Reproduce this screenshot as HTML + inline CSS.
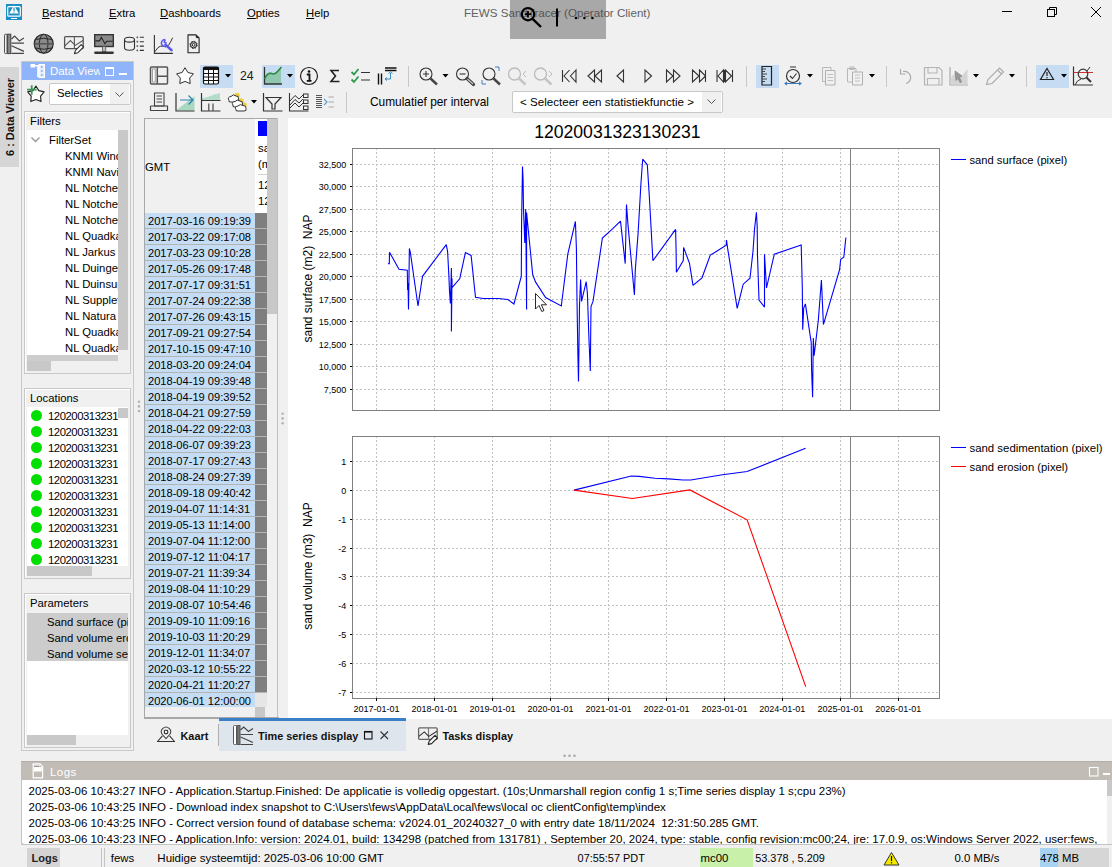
<!DOCTYPE html>
<html><head><meta charset="utf-8">
<style>
html,body{margin:0;padding:0}
body{width:1112px;height:867px;overflow:hidden;position:relative;background:#f0f0f0;font-family:"Liberation Sans",sans-serif;font-size:11.3px;color:#000}
.a{position:absolute}
.t{position:absolute;white-space:nowrap;line-height:16px;font-size:11.3px}
.u{text-decoration:underline;text-underline-offset:1px}
svg{position:absolute;overflow:visible}
</style></head><body>

<!-- ===== title bar ===== -->
<svg class="a" style="left:0;top:0" width="1112" height="60" viewBox="0 0 1112 60">
  <!-- app icon -->
  <rect x="6" y="4" width="16" height="16" fill="#1a8fc4"/>
  <rect x="7.7" y="6.7" width="12.6" height="9.5" rx="1" fill="none" stroke="#fff" stroke-width="1.2"/>
  <path d="M14 5.2 L18.8 13.6 L9.2 13.6 Z" fill="#fff"/>
  <rect x="13.4" y="7.6" width="1.2" height="3.4" fill="#1a8fc4"/>
  <rect x="13.4" y="11.6" width="1.2" height="1" fill="#1a8fc4"/>
  <rect x="11" y="18" width="6" height="1" fill="#fff"/>
  <!-- window controls -->
  <rect x="1002" y="11" width="10" height="1" fill="#000" shape-rendering="crispEdges"/>
  <rect x="1047.5" y="9.5" width="7" height="7" fill="none" stroke="#000" stroke-width="1"/>
  <path d="M1049.5 9.5 V7.5 H1056.5 V14.5 H1054.5" fill="none" stroke="#000" stroke-width="1"/>
  <path d="M1091 7 L1101 17 M1101 7 L1091 17" stroke="#000" stroke-width="1"/>
</svg>
<div class="t" style="left:42px;top:5px"><span class="u">B</span>estand</div>
<div class="t" style="left:109px;top:5px"><span class="u">E</span>xtra</div>
<div class="t" style="left:160px;top:5px"><span class="u">D</span>ashboards</div>
<div class="t" style="left:247px;top:5px"><span class="u">O</span>pties</div>
<div class="t" style="left:306px;top:5px"><span class="u">H</span>elp</div>
<div class="t" style="left:464px;top:5px;color:#606060;font-size:11.6px">FEWS SandTracer (Operator Client)</div>
<!-- gray overlay -->
<div class="a" style="left:510px;top:0;width:96px;height:39px;background:rgba(70,70,70,0.42)"></div>
<svg class="a" style="left:0;top:0" width="1112" height="60" viewBox="0 0 1112 60">
  <circle cx="528" cy="14.2" r="6.2" fill="none" stroke="#000" stroke-width="2.2"/>
  <path d="M524.8 14.2 H531.2 M528 11 V17.4" stroke="#000" stroke-width="1.8"/>
  <path d="M532.6 18.8 L541 27" stroke="#000" stroke-width="2.4"/>
  <rect x="556" y="8.5" width="2" height="18" fill="#000"/>
  <circle cx="576" cy="18" r="1.3" fill="#000"/><circle cx="584.4" cy="18" r="1.3" fill="#000"/><circle cx="592.4" cy="18" r="1.3" fill="#000"/>
</svg>

<!-- ===== main toolbar ===== -->
<svg class="a" style="left:0;top:0" width="220" height="60" viewBox="0 0 220 60" fill="none" stroke="#3a3a3a" stroke-width="1.2">
  <!-- ts display -->
  <rect x="4.6" y="34.2" width="2.4" height="19.4" rx="1" fill="#fff" stroke="#444" stroke-width="1"/>
  <rect x="7.6" y="34.2" width="3.2" height="19.4" fill="#888" stroke="#444" stroke-width="1"/>
  <path d="M11.5 39 L14.6 36 L19.4 40.9 L23.9 38.1 M11.5 43.2 H23.9 M11.5 45.8 L23.9 51.4 M11.5 53.4 H23.9" stroke="#444" stroke-width="1.2"/>
  <!-- globe -->
  <circle cx="43.7" cy="43.75" r="9.5" fill="#8a8a8a" stroke="#2a2a2a" stroke-width="1.2"/>
  <ellipse cx="43.7" cy="43.75" rx="4.3" ry="9.5" stroke="#2a2a2a" stroke-width="1"/>
  <path d="M35.5 39.5 Q43.7 37 51.9 39.5 M35.5 48 Q43.7 50.5 51.9 48" stroke="#2a2a2a" stroke-width="1"/>
  <path d="M34.5 43.75 H52.9" stroke="#555" stroke-width="1.6"/>
  <!-- picture+pencil -->
  <rect x="64.6" y="36.6" width="18.6" height="12" rx="1" stroke="#555" stroke-width="1.3"/>
  <path d="M74.4 36.6 V48.6 M64.8 45.8 L70.4 40.5 L75.2 45.4 L82.9 40.5" stroke="#555" stroke-width="1.1"/>
  <path d="M74.4 53.6 L75.5 50.3 L81.2 44.6 L83.6 47 L77.9 52.7 Z" fill="#fff" stroke="#333" stroke-width="1.1" stroke-linejoin="round"/>
  <!-- monitor -->
  <rect x="94.7" y="34.7" width="18.6" height="11.8" fill="#8a8a8a" stroke="#333" stroke-width="1.4"/>
  <path d="M95.5 40.9 H99.5 L101.3 37.3 L105 43.75 L106.6 41.3 H112.6" stroke="#222" stroke-width="1.1"/>
  <rect x="102.5" y="46.6" width="3.3" height="5" fill="#bbb" stroke="#555" stroke-width="0.8"/>
  <rect x="94.2" y="51.4" width="19.6" height="2.6" rx="1.2" fill="#333" stroke="none"/>
  <!-- db list -->
  <ellipse cx="129.5" cy="39.7" rx="5" ry="2.4" stroke="#333" stroke-width="1.1"/>
  <path d="M124.5 39.7 V47.8 A5 2.4 0 0 0 134.5 47.8 V39.7" stroke="#333" stroke-width="1.1"/>
  <path d="M139.8 37.3 H143.9 M139.8 41.7 H143.9 M139.8 46.1 H143.9 M139.8 50.4 H143.9" stroke="#333" stroke-width="1.1"/>
  <g fill="#555" stroke="none"><path d="M137.3 36.2 L138.4 37.3 L137.3 38.4 L136.2 37.3Z M137.3 40.6 L138.4 41.7 L137.3 42.8 L136.2 41.7Z M137.3 45 L138.4 46.1 L137.3 47.2 L136.2 46.1Z M137.3 49.3 L138.4 50.4 L137.3 51.5 L136.2 50.4Z"/></g>
  <!-- chart wrench -->
  <path d="M154.4 34.9 V53.4 H172.9" stroke="#333" stroke-width="1.1"/>
  <path d="M154.8 51.8 Q158 46.5 160.4 46.2 Q163.5 45.8 166 47 Q169 46 170.9 41.3 L172.6 37.7" stroke="#333" stroke-width="1"/>
  <path d="M165.5 44.6 L171.5 50.2" stroke="#5a5af0" stroke-width="2.6" stroke-linecap="round"/>
  <path d="M165.2 39.6 A3.4 3.4 0 1 0 167.3 45.3 M165.2 39.6 L164.3 42.2 L166.6 43.3" stroke="#5a5af0" stroke-width="1.6"/>
  <!-- doc gear -->
  <path d="M188 34.9 H196 L199.1 38 V52.7 H188 Z" stroke="#222" stroke-width="1.1" stroke-linejoin="round"/>
  <path d="M196.3 35.2 V37.7 H198.8" fill="#222" stroke="#222" stroke-width="0.8"/>
  <circle cx="193.6" cy="44.9" r="3.6" stroke="#222" stroke-width="1" stroke-dasharray="1.6 1.2"/>
  <circle cx="193.6" cy="44.9" r="3" stroke="#222" stroke-width="1"/>
  <circle cx="193.6" cy="44.9" r="1.4" stroke="#222" stroke-width="1"/>
</svg>

<!-- ===== left vertical tab ===== -->
<div class="a" style="left:0;top:67px;width:19px;height:100px;background:#d6d6d6"></div>
<div class="a" style="left:0;top:167px;width:19px;height:0"></div>
<div class="t" style="left:-30.5px;top:109px;width:80px;height:16px;transform:rotate(-90deg);font-weight:bold;font-size:11px;text-align:center;color:#111">6 : Data Viewer</div>

<!-- ===== data view panel ===== -->
<div class="a" style="left:21px;top:61px;width:111px;height:688px;border:1px solid #c8c8c8;background:#f0f0f0"></div>
<div class="a" style="left:22px;top:62px;width:111px;height:18px;background:#8fb4fa"></div>
<div class="a" style="left:50px;top:62px;width:50px;height:18px;overflow:hidden"><div class="t" style="left:0;top:1px;color:#fff;font-size:11.4px">Data View</div></div>
<svg class="a" style="left:0;top:0" width="140" height="120" viewBox="0 0 140 120">
  <!-- tree icon -->
  <rect x="30.5" y="64" width="4.5" height="3.5" fill="#fff"/>
  <path d="M35 65.8 H38 V77" stroke="#fff" stroke-width="1.6" fill="none"/>
  <rect x="39" y="64.5" width="5.5" height="13" fill="#e8eefa" stroke="#fff" stroke-width="1"/>
  <circle cx="41.8" cy="67" r="1.1" fill="#8fb4fa"/><circle cx="41.8" cy="71" r="1.1" fill="#8fb4fa"/><circle cx="41.8" cy="75" r="1.1" fill="#8fb4fa"/>
  <rect x="105.5" y="67.5" width="8" height="8" fill="none" stroke="#fff" stroke-width="1"/><rect x="105" y="67" width="9" height="2" fill="#fff"/>
  <rect x="119" y="73" width="8" height="2" fill="#fff"/>
  <!-- star with plus -->
  <path d="M35.9 86.0 L38.8 90.6 L44.1 91.9 L40.6 96.1 L41.0 101.6 L35.9 99.5 L30.8 101.6 L31.2 96.1 L27.7 91.9 L33.0 90.6 Z" fill="#fff" stroke="#222" stroke-width="1.1" stroke-linejoin="round"/>
  <path d="M31.7 85.2 V94.8 M27.1 89.7 H36.7" stroke="#3a9a55" stroke-width="1.8"/>
</svg>
<!-- combo selecties -->
<div class="a" style="left:49px;top:83px;width:80px;height:20px;border:1px solid #c8c8c8;border-radius:2px;background:#fff"></div>
<div class="a" style="left:110px;top:84px;width:19px;height:20px;background:#f0f0f0"></div>
<svg class="a" style="left:0;top:0" width="140" height="120" viewBox="0 0 140 120"><path d="M115.5 92.5 L119.5 96.5 L123.5 92.5" fill="none" stroke="#555" stroke-width="1"/></svg>
<div class="t" style="left:57px;top:85px">Selecties</div>

<!-- filters group -->
<div class="a" style="left:24px;top:111px;width:105px;height:261px;border:1px solid #c8c8c8;box-shadow:inset 1px 1px 0 #fff"></div>
<div class="t" style="left:30px;top:113px">Filters</div>
<div class="a" style="left:27px;top:130px;width:91px;height:231px;background:#fff;overflow:hidden">
  <div class="t" style="left:22px;top:2px">FilterSet</div>
  <div class="t" style="left:38px;top:18px">KNMI Wind</div>
  <div class="t" style="left:38px;top:34px">KNMI Navigator</div>
  <div class="t" style="left:38px;top:50px">NL Notchedd</div>
  <div class="t" style="left:38px;top:66px">NL Notchedd</div>
  <div class="t" style="left:38px;top:82px">NL Notchedd</div>
  <div class="t" style="left:38px;top:98px">NL Quadkaart</div>
  <div class="t" style="left:38px;top:114px">NL Jarkus</div>
  <div class="t" style="left:38px;top:130px">NL Duingebied</div>
  <div class="t" style="left:38px;top:146px">NL Duinsuppletie</div>
  <div class="t" style="left:38px;top:162px">NL Suppleties</div>
  <div class="t" style="left:38px;top:178px">NL Natura</div>
  <div class="t" style="left:38px;top:194px">NL Quadkaart</div>
  <div class="t" style="left:38px;top:210px">NL Quadkaart</div>
  <div class="t" style="left:38px;top:226px">NL Sand S</div>
  <div class="a" style="left:0;top:225px;width:91px;height:6px;background:#cdcdcd"></div>
</div>
<svg class="a" style="left:0;top:0" width="140" height="160" viewBox="0 0 140 160"><path d="M31.5 137.5 L35.5 141.5 L39.5 137.5" fill="none" stroke="#999" stroke-width="1.4"/></svg>
<div class="a" style="left:118px;top:130px;width:10px;height:231px;background:#f0f0f0"></div>
<div class="a" style="left:118px;top:130px;width:10px;height:220px;background:#c8c8c8"></div>
<div class="a" style="left:27px;top:361px;width:101px;height:10px;background:#f0f0f0"></div>
<div class="a" style="left:27px;top:361px;width:24px;height:10px;background:#c8c8c8"></div>

<!-- locations group -->
<div class="a" style="left:24px;top:388px;width:105px;height:189px;border:1px solid #c8c8c8;box-shadow:inset 1px 1px 0 #fff"></div>
<div class="t" style="left:30px;top:390px">Locations</div>
<div class="a" style="left:27px;top:407px;width:91px;height:159px;background:#fff;overflow:hidden">
  <div class="a" style="left:0;top:0;width:91px"><div class="a" style="left:4px;top:3px;width:11px;height:11px;border-radius:50%;background:#00e000"></div><div class="t" style="left:21px;top:1px;letter-spacing:-0.45px">120200313231</div><div class="a" style="left:4px;top:19px;width:11px;height:11px;border-radius:50%;background:#00e000"></div><div class="t" style="left:21px;top:17px;letter-spacing:-0.45px">120200313231</div><div class="a" style="left:4px;top:35px;width:11px;height:11px;border-radius:50%;background:#00e000"></div><div class="t" style="left:21px;top:33px;letter-spacing:-0.45px">120200313231</div><div class="a" style="left:4px;top:51px;width:11px;height:11px;border-radius:50%;background:#00e000"></div><div class="t" style="left:21px;top:49px;letter-spacing:-0.45px">120200313231</div><div class="a" style="left:4px;top:67px;width:11px;height:11px;border-radius:50%;background:#00e000"></div><div class="t" style="left:21px;top:65px;letter-spacing:-0.45px">120200313231</div><div class="a" style="left:4px;top:83px;width:11px;height:11px;border-radius:50%;background:#00e000"></div><div class="t" style="left:21px;top:81px;letter-spacing:-0.45px">120200313231</div><div class="a" style="left:4px;top:99px;width:11px;height:11px;border-radius:50%;background:#00e000"></div><div class="t" style="left:21px;top:97px;letter-spacing:-0.45px">120200313231</div><div class="a" style="left:4px;top:115px;width:11px;height:11px;border-radius:50%;background:#00e000"></div><div class="t" style="left:21px;top:113px;letter-spacing:-0.45px">120200313231</div><div class="a" style="left:4px;top:131px;width:11px;height:11px;border-radius:50%;background:#00e000"></div><div class="t" style="left:21px;top:129px;letter-spacing:-0.45px">120200313231</div><div class="a" style="left:4px;top:147px;width:11px;height:11px;border-radius:50%;background:#00e000"></div><div class="t" style="left:21px;top:145px;letter-spacing:-0.45px">120200313231</div></div>
</div>
<div class="a" style="left:118px;top:407px;width:10px;height:159px;background:#fff"></div>
<div class="a" style="left:118px;top:408px;width:10px;height:10px;background:#c8c8c8"></div>
<div class="a" style="left:27px;top:566px;width:101px;height:10px;background:#f0f0f0"></div>
<div class="a" style="left:27px;top:566px;width:65px;height:10px;background:#c8c8c8"></div>

<!-- parameters group -->
<div class="a" style="left:24px;top:593px;width:105px;height:153px;border:1px solid #c8c8c8;box-shadow:inset 1px 1px 0 #fff"></div>
<div class="t" style="left:30px;top:595px">Parameters</div>
<div class="a" style="left:27px;top:613px;width:101px;height:122px;background:#fff;overflow:hidden">
  <div class="a" style="left:0;top:0;width:101px;height:48px;background:#cccccc"></div>
  <div class="t" style="left:20px;top:1px">Sand surface (pixel)</div>
  <div class="t" style="left:20px;top:17px">Sand volume erosion</div>
  <div class="t" style="left:20px;top:33px">Sand volume sedimentation</div>
</div>
<div class="a" style="left:27px;top:735px;width:101px;height:10px;background:#f0f0f0"></div>
<div class="a" style="left:27px;top:735px;width:49px;height:10px;background:#c8c8c8"></div>

<!-- ===== chart toolbar ===== -->
<div class="a" style="left:200px;top:65px;width:33px;height:23px;background:#c5dcf3"></div>
<div class="a" style="left:262px;top:65px;width:33px;height:23px;background:#c5dcf3"></div>
<div class="a" style="left:756px;top:65px;width:23px;height:23px;background:#c5dcf3"></div>
<div class="a" style="left:1036px;top:65px;width:33px;height:23px;background:#c5dcf3"></div>
<div class="t" style="left:240px;top:68px;font-size:12.3px;color:#222">24</div>
<div class="t" style="left:370px;top:94px;font-size:11.9px">Cumulatief per interval</div>
<div class="a" style="left:512px;top:91px;width:209px;height:20px;border:1px solid #c8c8c8;border-radius:2px;background:#fff"></div>
<div class="a" style="left:702px;top:92px;width:19px;height:20px;background:#f0f0f0"></div>
<div class="t" style="left:520px;top:94px;font-size:11.6px">&lt; Selecteer een statistiekfunctie &gt;</div>
<svg class="a" id="tb" style="left:0;top:0" width="1112" height="120" viewBox="0 0 1112 120" fill="none" stroke="#333" stroke-width="1.2">
  <path d="M707.5 99.5 L711.5 103.5 L715.5 99.5" stroke="#555" stroke-width="1"/>
  <!-- separators -->
  <path d="M408.5 66 V87 M746.5 66 V87 M886.5 66 V87 M1026.5 66 V87 M346.5 92 V113" stroke="#c8c8c8" stroke-width="1"/>
  <!-- layout -->
  <rect x="150.5" y="67" width="17" height="17" rx="1" stroke="#555" stroke-width="1.5"/>
  <path d="M157.3 67 V84 M157.3 76.2 H167.5" stroke="#555" stroke-width="1.5"/>
  <rect x="152.6" y="69" width="2.6" height="13" fill="#fff" stroke="#888" stroke-width="0.8"/>
  <!-- star -->
  <path d="M185.0 67.7 L187.9 72.5 L193.4 73.8 L189.7 78.0 L190.2 83.6 L185.0 81.4 L179.8 83.6 L180.3 78.0 L176.6 73.8 L182.1 72.5 Z" fill="#fff" stroke="#333" stroke-width="1" stroke-linejoin="round"/>
  <!-- table -->
  <rect x="203.5" y="67" width="15" height="17" rx="1.5" fill="#fff" stroke="#111" stroke-width="1.2"/>
  <rect x="203.5" y="67" width="15" height="3" fill="#111" stroke="none"/>
  <path d="M203.5 73.5 H218.5 M203.5 77 H218.5 M203.5 80.5 H218.5 M208.5 70 V84 M213.5 70 V84" stroke="#111" stroke-width="1"/>
  <!-- chart -->
  <path d="M264.5 76 Q268 71 271 72.5 Q275 74 278 71 L281 67.5 V84 H264.5 Z" fill="#8fc7b0" stroke="none"/>
  <path d="M264.5 67 V84 H282" stroke="#333" stroke-width="1.3"/>
  <path d="M264.5 79 Q268 72 271.5 73.5 Q275 75 278 71 L281.5 67" stroke="#2a8a3a" stroke-width="1.5"/>
  <!-- info -->
  <circle cx="309" cy="76" r="8.5" stroke="#222" stroke-width="1.2"/>
  <circle cx="309" cy="71.5" r="1.3" fill="#111" stroke="none"/>
  <path d="M306.8 74.5 H309.5 V80.5 M306.8 80.8 H311.5" stroke="#111" stroke-width="1.8"/>
  <!-- sigma -->
  <path d="M339 70.5 H331 L335.5 76 L331 81.5 H339.5" stroke="#222" stroke-width="1.6"/>
  <!-- checklist -->
  <path d="M351.5 72 L354 74.5 L358.5 69 M351.5 79.5 L354 82 L358.5 76.5" stroke="#2a9a4a" stroke-width="1.8"/>
  <path d="M361 72.5 H370 M361 80 H370" stroke="#333" stroke-width="1.2"/>
  <!-- sort icon -->
  <path d="M378.5 73.5 V84.5 M381.5 73.5 V84.5" stroke="#111" stroke-width="1.4"/>
  <path d="M385 68 H396.5 M385 70.5 H396.5" stroke="#111" stroke-width="1.4"/>
  <path d="M390.5 73 V79 H385 M388.5 73.5 L390.5 72 L392.5 73.5 M387 77.5 L385 79 L387 80.5" stroke="#3a8ac4" stroke-width="1"/>
  <!-- zoom in -->
  <circle cx="426" cy="74" r="6" stroke="#333" stroke-width="1.1"/>
  <path d="M423 74 H429 M426 71 V77" stroke="#333" stroke-width="1.1"/>
  <path d="M430.5 78.5 L437 84.5" stroke="#444" stroke-width="2.4"/>
  <!-- zoom out -->
  <circle cx="462.5" cy="74" r="6" stroke="#333" stroke-width="1.1"/>
  <path d="M459.5 74 H465.5" stroke="#333" stroke-width="1.1"/>
  <path d="M467 78.5 L473.5 84.5" stroke="#444" stroke-width="3.2" stroke-linecap="round"/><path d="M467.8 79.3 L472.7 83.7" stroke="#d8d8d8" stroke-width="1.1" stroke-linecap="round"/>
  <!-- zoom fit -->
  <circle cx="489" cy="74" r="6" stroke="#333" stroke-width="1.1"/>
  <path d="M493.5 78.5 L500 84.5" stroke="#444" stroke-width="2.4"/>
  <path d="M482 80 V84 H486 M495 67 H499 V71" stroke="#3a7fc0" stroke-width="1"/>
  <!-- zoom prev/next gray -->
  <circle cx="514.5" cy="74" r="6" stroke="#bbb" stroke-width="1.3"/>
  <path d="M519 78.5 L525.5 84.5" stroke="#c4c4c4" stroke-width="2.4"/>
  <path d="M526 71 L523 74 L526 77" stroke="#bbb" stroke-width="1"/>
  <circle cx="540.5" cy="74" r="6" stroke="#bbb" stroke-width="1.3"/>
  <path d="M545 78.5 L551.5 84.5" stroke="#c4c4c4" stroke-width="2.4"/>
  <path d="M549 71 L552 74 L549 77" stroke="#bbb" stroke-width="1"/>
  <!-- nav -->
  <g stroke="#333" stroke-width="1.1">
  <path d="M562.5 70 V82 M569.5 70 L564 76 L569.5 82 M576 70 L570.5 76 L576 82 Z"/>
  <path d="M588 76 L594.5 70 V82 Z M595 76 L601.5 70 V82 Z"/>
  <path d="M617 76 L623.5 70 V82 Z"/>
  <path d="M651.5 76 L645 70 V82 Z"/>
  <path d="M666.5 70 L673 76 L666.5 82 Z M673.5 70 L680 76 L673.5 82 Z"/>
  <path d="M692.5 70 L699 76 L692.5 82 Z M699.5 70 L705.5 76 L699.5 82 Z M705.5 70 V82"/>
  <path d="M717 70 V82 M732.5 70 V82 M724.5 70 V82 M718 76 L723.5 70 V82 Z M731.5 76 L725.5 70 V82 Z"/>
  </g>
  <!-- ruler -->
  <path d="M762 66.5 H771.5 V85 H762 Z" stroke="#222" stroke-width="1.2"/>
  <path d="M762 69 H766 M762 71.5 H765 M762 74 H767 M762 76.5 H765 M762 79 H767 M762 81.5 H765" stroke="#444" stroke-width="1"/>
  <!-- stopwatch -->
  <circle cx="793" cy="76" r="6.5" stroke="#333" stroke-width="1.2"/>
  <path d="M790 67 H796 M790 76 L792.5 78.5 L796.5 73.5" stroke="#333" stroke-width="1.1"/>
  <path d="M785 83.5 H801 M787 82 L785 83.5 L787 85 M799 82 L801 83.5 L799 85" stroke="#3a7fc0" stroke-width="1.1"/>
  <!-- copy -->
  <path d="M822.5 67.5 H831 V81.5 H822.5 Z" stroke="#b8b8b8" stroke-width="1"/>
  <path d="M825.5 70.5 H835 V85 H825.5 Z" fill="#f0f0f0" stroke="#b0b0b0" stroke-width="1"/>
  <path d="M827.5 74.5 H833 M827.5 77.5 H833 M827.5 80.5 H833" stroke="#c0c0c0" stroke-width="1"/>
  <!-- paste -->
  <path d="M847.5 68.5 H856 V82 H847.5 Z" stroke="#b8b8b8" stroke-width="1"/>
  <rect x="850" y="67" width="4" height="2.5" stroke="#b8b8b8" stroke-width="1"/>
  <path d="M852.5 72 H862.5 V85 H852.5 Z" fill="#f0f0f0" stroke="#b0b0b0" stroke-width="1"/>
  <path d="M855 75 H860 M855 78 H860 M855 81 H860" stroke="#c0c0c0" stroke-width="1"/>
  <!-- undo -->
  <path d="M903 71.5 A6 6 0 1 1 906 83.5" stroke="#aaa" stroke-width="1.2"/>
  <path d="M900.5 69 V74 H905.5" stroke="#aaa" stroke-width="1.2"/>
  <!-- save -->
  <path d="M924.5 67.5 H939 L942 70.5 V85 H924.5 Z" stroke="#b4b4b4" stroke-width="1.2"/>
  <path d="M928 67.5 V73 H937 V67.5 M927.5 85 V78.5 H939 V85" stroke="#b4b4b4" stroke-width="1.1"/>
  <!-- chart cursor -->
  <path d="M950 67 V85 H968" stroke="#aaa" stroke-width="1.2"/>
  <path d="M950.5 78 L955 73 L960 78 L967.5 69 V84.5 H950.5 Z" fill="#d4d4d4" stroke="none"/>
  <path d="M955 71 L962 76 L959.5 77.5 L961.5 82 L960 82.5 L958 78.5 L956 80.5 Z" fill="#999" stroke="#888" stroke-width="0.8"/>
  <!-- pencil -->
  <path d="M986.5 84.5 L988 79.5 L999.5 68 L1003.5 72 L992 83.5 Z M997.5 70 L1001.5 74" stroke="#aaa" stroke-width="1.1"/>
  <!-- warning -->
  <path d="M1047 68.5 L1053.5 79.5 H1040.5 Z" stroke="#222" stroke-width="1.2"/>
  <path d="M1047 72 V76" stroke="#222" stroke-width="1.2"/><circle cx="1047" cy="77.8" r="0.7" fill="#222" stroke="none"/>
  <!-- chart magnifier -->
  <path d="M1073.5 66.5 V85 H1093" stroke="#333" stroke-width="1.2"/>
  <path d="M1073.5 72.5 H1093" stroke="#d03030" stroke-width="1"/>
  <circle cx="1083" cy="74" r="4.8" stroke="#333" stroke-width="1.2"/>
  <path d="M1086.5 77.5 L1091 82" stroke="#333" stroke-width="2"/>
  <path d="M1075 85 Q1077 80 1081 79 M1090 67 L1087 71" stroke="#333" stroke-width="1"/>
  <!-- row 2 -->
  <!-- print -->
  <path d="M154.5 93 H164 V106 H154.5 Z M156.5 96 H162 M156.5 99 H162 M156.5 102 H162" stroke="#444" stroke-width="1.1"/>
  <path d="M150.5 106 V110.5 H167.5 V106 H150.5" stroke="#444" stroke-width="1.2"/>
  <!-- chart arrow -->
  <path d="M176 110.5 L194.5 96 V110.5 Z" fill="#a8d8c0" stroke="none"/>
  <path d="M176 93 V111 H194.5" stroke="#333" stroke-width="1.2"/>
  <path d="M180 100 H193 M188.5 95.5 L193 100 L188.5 104.5" stroke="#2a80b0" stroke-width="1.2"/>
  <!-- bar area -->
  <path d="M201.5 98 Q206 97.5 209 96.5 Q214 94 220 93 V100 H201.5 Z" fill="#b4dcc8" stroke="none"/>
  <path d="M201.5 93 V111 H220.5 M201.5 100.5 H220.5" stroke="#333" stroke-width="1.2"/>
  <path d="M208.8 103.5 V111 M213 103.5 V111" stroke="#555" stroke-width="1.3"/>
  <!-- clouds -->
  <circle cx="237" cy="95.5" r="2.8" fill="#f0d040" stroke="none"/>
  <circle cx="241" cy="101" r="2.8" fill="#f0d040" stroke="none"/>
  <circle cx="244" cy="105" r="2.8" fill="#f0d040" stroke="none"/>
  <path d="M229 100.5 Q227 97 231 96.5 Q233 93.5 236 96 Q239 95.5 238.5 99 Q240 101.5 237 102 H231 Q228 102 229 100.5 Z" fill="#fff" stroke="#333" stroke-width="1"/>
  <path d="M233 105 Q231 102 235 101.5 Q237 99 240 101 Q243 101 242.5 104 Q244 106.5 241 107 H235 Q232 107 233 105 Z" fill="#fff" stroke="#333" stroke-width="1"/>
  <path d="M236 109.5 Q234 106.5 238 106 Q240 103.5 243 105.5 Q246.5 105.5 246 108.5 Q247 111 244 111 H238 Q235 111 236 109.5 Z" fill="#fff" stroke="#333" stroke-width="1"/>
  <!-- filter -->
  <path d="M263.5 93 V111 H282.5" stroke="#333" stroke-width="1.2"/>
  <path d="M266 97.5 H281 L275 104 V109 H272 V104 Z" stroke="#333" stroke-width="1.2"/>
  <!-- chart lines -->
  <path d="M289.5 93 V111 H308.5" stroke="#333" stroke-width="1.1"/>
  <path d="M290 101 L295 95.5 L299 99 L303 95 M290 105 L295 99.5 L299 103 L303 99 M290 108 L295 103 L299 107 L303 103" stroke="#333" stroke-width="1"/>
  <rect x="303.5" y="94" width="4.5" height="3.5" stroke="#333" stroke-width="1"/>
  <rect x="303.5" y="100" width="4.5" height="3.5" stroke="#333" stroke-width="1"/>
  <rect x="303.5" y="106" width="4.5" height="3.5" stroke="#333" stroke-width="1"/>
  <!-- indent -->
  <path d="M316 95.5 H322 M316 97.5 H322 M316 99.5 H322 M316 101.5 H322 M316 103.5 H322 M316 105.5 H322 M316 107.5 H322" stroke="#555" stroke-width="1" shape-rendering="crispEdges"/>
  <path d="M324 99 L327 102 L324 105" stroke="#5aa0d0" stroke-width="1.1"/>
  <path d="M328.5 97 H334 M328.5 102 H334 M328.5 107 H334" stroke="#aaa" stroke-width="1"/>
  <!-- dropdown arrows -->
  <g fill="#000" stroke="none">
  <path d="M225 74 H231 L228 77.5 Z"/><path d="M287 74 H293 L290 77.5 Z"/><path d="M442.5 74 H448.5 L445.5 77.5 Z"/>
  <path d="M251 100 H257 L254 103.5 Z"/><path d="M807 74 H813 L810 77.5 Z"/><path d="M869 74 H875 L872 77.5 Z"/>
  <path d="M973 74 H979 L976 77.5 Z"/><path d="M1009 74 H1015 L1012 77.5 Z"/><path d="M1061 74 H1067 L1064 77.5 Z"/>
  </g>
</svg>

<!-- ===== table ===== -->
<div class="a" style="left:144px;top:118px;width:132px;height:599px;border:1px solid #a8a8a8;border-right:1px solid #c0c0c0;background:#f0f0f0"></div>
<div class="t" style="left:145px;top:159px">GMT</div>
<div class="a" style="left:255px;top:119px;width:12px;height:94px;background:#fff;overflow:hidden">
  <div class="a" style="left:3px;top:2px;width:12px;height:15px;background:#0000ff"></div>
  <div class="t" style="left:3px;top:139px"></div>
  <div class="t" style="left:3px;top:21px">sand</div>
  <div class="t" style="left:3px;top:36.5px">(m2)</div>
  <div class="a" style="left:3px;top:55px;width:12px;height:1px;background:#d0d0d0"></div>
  <div class="t" style="left:3px;top:58px">120200</div>
  <div class="t" style="left:3px;top:74px">120200</div>
</div>
<div class="a" style="left:145px;top:213px;width:110px;height:15px;background:#c5ddf4"></div><div class="a" style="left:255px;top:213px;width:12px;height:15px;background:#7f7f7f"></div><div class="t" style="left:148px;top:213px;font-size:11.1px">2017-03-16 09:19:39</div><div class="a" style="left:145px;top:228px;width:122px;height:1px;background:#b4b4b4"></div><div class="a" style="left:145px;top:229px;width:110px;height:15px;background:#c5ddf4"></div><div class="a" style="left:255px;top:229px;width:12px;height:15px;background:#7f7f7f"></div><div class="t" style="left:148px;top:229px;font-size:11.1px">2017-03-22 09:17:08</div><div class="a" style="left:145px;top:244px;width:122px;height:1px;background:#b4b4b4"></div><div class="a" style="left:145px;top:245px;width:110px;height:15px;background:#c5ddf4"></div><div class="a" style="left:255px;top:245px;width:12px;height:15px;background:#7f7f7f"></div><div class="t" style="left:148px;top:245px;font-size:11.1px">2017-03-23 09:10:28</div><div class="a" style="left:145px;top:260px;width:122px;height:1px;background:#b4b4b4"></div><div class="a" style="left:145px;top:261px;width:110px;height:15px;background:#c5ddf4"></div><div class="a" style="left:255px;top:261px;width:12px;height:15px;background:#7f7f7f"></div><div class="t" style="left:148px;top:261px;font-size:11.1px">2017-05-26 09:17:48</div><div class="a" style="left:145px;top:276px;width:122px;height:1px;background:#b4b4b4"></div><div class="a" style="left:145px;top:277px;width:110px;height:15px;background:#c5ddf4"></div><div class="a" style="left:255px;top:277px;width:12px;height:15px;background:#7f7f7f"></div><div class="t" style="left:148px;top:277px;font-size:11.1px">2017-07-17 09:31:51</div><div class="a" style="left:145px;top:292px;width:122px;height:1px;background:#b4b4b4"></div><div class="a" style="left:145px;top:293px;width:110px;height:15px;background:#c5ddf4"></div><div class="a" style="left:255px;top:293px;width:12px;height:15px;background:#7f7f7f"></div><div class="t" style="left:148px;top:293px;font-size:11.1px">2017-07-24 09:22:38</div><div class="a" style="left:145px;top:308px;width:122px;height:1px;background:#b4b4b4"></div><div class="a" style="left:145px;top:309px;width:110px;height:15px;background:#c5ddf4"></div><div class="a" style="left:255px;top:309px;width:12px;height:15px;background:#7f7f7f"></div><div class="t" style="left:148px;top:309px;font-size:11.1px">2017-07-26 09:43:15</div><div class="a" style="left:145px;top:324px;width:122px;height:1px;background:#b4b4b4"></div><div class="a" style="left:145px;top:325px;width:110px;height:15px;background:#c5ddf4"></div><div class="a" style="left:255px;top:325px;width:12px;height:15px;background:#7f7f7f"></div><div class="t" style="left:148px;top:325px;font-size:11.1px">2017-09-21 09:27:54</div><div class="a" style="left:145px;top:340px;width:122px;height:1px;background:#b4b4b4"></div><div class="a" style="left:145px;top:341px;width:110px;height:15px;background:#c5ddf4"></div><div class="a" style="left:255px;top:341px;width:12px;height:15px;background:#7f7f7f"></div><div class="t" style="left:148px;top:341px;font-size:11.1px">2017-10-15 09:47:10</div><div class="a" style="left:145px;top:356px;width:122px;height:1px;background:#b4b4b4"></div><div class="a" style="left:145px;top:357px;width:110px;height:15px;background:#c5ddf4"></div><div class="a" style="left:255px;top:357px;width:12px;height:15px;background:#7f7f7f"></div><div class="t" style="left:148px;top:357px;font-size:11.1px">2018-03-20 09:24:04</div><div class="a" style="left:145px;top:372px;width:122px;height:1px;background:#b4b4b4"></div><div class="a" style="left:145px;top:373px;width:110px;height:15px;background:#c5ddf4"></div><div class="a" style="left:255px;top:373px;width:12px;height:15px;background:#7f7f7f"></div><div class="t" style="left:148px;top:373px;font-size:11.1px">2018-04-19 09:39:48</div><div class="a" style="left:145px;top:388px;width:122px;height:1px;background:#b4b4b4"></div><div class="a" style="left:145px;top:389px;width:110px;height:15px;background:#c5ddf4"></div><div class="a" style="left:255px;top:389px;width:12px;height:15px;background:#7f7f7f"></div><div class="t" style="left:148px;top:389px;font-size:11.1px">2018-04-19 09:39:52</div><div class="a" style="left:145px;top:404px;width:122px;height:1px;background:#b4b4b4"></div><div class="a" style="left:145px;top:405px;width:110px;height:15px;background:#c5ddf4"></div><div class="a" style="left:255px;top:405px;width:12px;height:15px;background:#7f7f7f"></div><div class="t" style="left:148px;top:405px;font-size:11.1px">2018-04-21 09:27:59</div><div class="a" style="left:145px;top:420px;width:122px;height:1px;background:#b4b4b4"></div><div class="a" style="left:145px;top:421px;width:110px;height:15px;background:#c5ddf4"></div><div class="a" style="left:255px;top:421px;width:12px;height:15px;background:#7f7f7f"></div><div class="t" style="left:148px;top:421px;font-size:11.1px">2018-04-22 09:22:03</div><div class="a" style="left:145px;top:436px;width:122px;height:1px;background:#b4b4b4"></div><div class="a" style="left:145px;top:437px;width:110px;height:15px;background:#c5ddf4"></div><div class="a" style="left:255px;top:437px;width:12px;height:15px;background:#7f7f7f"></div><div class="t" style="left:148px;top:437px;font-size:11.1px">2018-06-07 09:39:23</div><div class="a" style="left:145px;top:452px;width:122px;height:1px;background:#b4b4b4"></div><div class="a" style="left:145px;top:453px;width:110px;height:15px;background:#c5ddf4"></div><div class="a" style="left:255px;top:453px;width:12px;height:15px;background:#7f7f7f"></div><div class="t" style="left:148px;top:453px;font-size:11.1px">2018-07-17 09:27:43</div><div class="a" style="left:145px;top:468px;width:122px;height:1px;background:#b4b4b4"></div><div class="a" style="left:145px;top:469px;width:110px;height:15px;background:#c5ddf4"></div><div class="a" style="left:255px;top:469px;width:12px;height:15px;background:#7f7f7f"></div><div class="t" style="left:148px;top:469px;font-size:11.1px">2018-08-24 09:27:39</div><div class="a" style="left:145px;top:484px;width:122px;height:1px;background:#b4b4b4"></div><div class="a" style="left:145px;top:485px;width:110px;height:15px;background:#c5ddf4"></div><div class="a" style="left:255px;top:485px;width:12px;height:15px;background:#7f7f7f"></div><div class="t" style="left:148px;top:485px;font-size:11.1px">2018-09-18 09:40:42</div><div class="a" style="left:145px;top:500px;width:122px;height:1px;background:#b4b4b4"></div><div class="a" style="left:145px;top:501px;width:110px;height:15px;background:#c5ddf4"></div><div class="a" style="left:255px;top:501px;width:12px;height:15px;background:#7f7f7f"></div><div class="t" style="left:148px;top:501px;font-size:11.1px">2019-04-07 11:14:31</div><div class="a" style="left:145px;top:516px;width:122px;height:1px;background:#b4b4b4"></div><div class="a" style="left:145px;top:517px;width:110px;height:15px;background:#c5ddf4"></div><div class="a" style="left:255px;top:517px;width:12px;height:15px;background:#7f7f7f"></div><div class="t" style="left:148px;top:517px;font-size:11.1px">2019-05-13 11:14:00</div><div class="a" style="left:145px;top:532px;width:122px;height:1px;background:#b4b4b4"></div><div class="a" style="left:145px;top:533px;width:110px;height:15px;background:#c5ddf4"></div><div class="a" style="left:255px;top:533px;width:12px;height:15px;background:#7f7f7f"></div><div class="t" style="left:148px;top:533px;font-size:11.1px">2019-07-04 11:12:00</div><div class="a" style="left:145px;top:548px;width:122px;height:1px;background:#b4b4b4"></div><div class="a" style="left:145px;top:549px;width:110px;height:15px;background:#c5ddf4"></div><div class="a" style="left:255px;top:549px;width:12px;height:15px;background:#7f7f7f"></div><div class="t" style="left:148px;top:549px;font-size:11.1px">2019-07-12 11:04:17</div><div class="a" style="left:145px;top:564px;width:122px;height:1px;background:#b4b4b4"></div><div class="a" style="left:145px;top:565px;width:110px;height:15px;background:#c5ddf4"></div><div class="a" style="left:255px;top:565px;width:12px;height:15px;background:#7f7f7f"></div><div class="t" style="left:148px;top:565px;font-size:11.1px">2019-07-21 11:39:34</div><div class="a" style="left:145px;top:580px;width:122px;height:1px;background:#b4b4b4"></div><div class="a" style="left:145px;top:581px;width:110px;height:15px;background:#c5ddf4"></div><div class="a" style="left:255px;top:581px;width:12px;height:15px;background:#7f7f7f"></div><div class="t" style="left:148px;top:581px;font-size:11.1px">2019-08-04 11:10:29</div><div class="a" style="left:145px;top:596px;width:122px;height:1px;background:#b4b4b4"></div><div class="a" style="left:145px;top:597px;width:110px;height:15px;background:#c5ddf4"></div><div class="a" style="left:255px;top:597px;width:12px;height:15px;background:#7f7f7f"></div><div class="t" style="left:148px;top:597px;font-size:11.1px">2019-08-07 10:54:46</div><div class="a" style="left:145px;top:612px;width:122px;height:1px;background:#b4b4b4"></div><div class="a" style="left:145px;top:613px;width:110px;height:15px;background:#c5ddf4"></div><div class="a" style="left:255px;top:613px;width:12px;height:15px;background:#7f7f7f"></div><div class="t" style="left:148px;top:613px;font-size:11.1px">2019-09-10 11:09:16</div><div class="a" style="left:145px;top:628px;width:122px;height:1px;background:#b4b4b4"></div><div class="a" style="left:145px;top:629px;width:110px;height:15px;background:#c5ddf4"></div><div class="a" style="left:255px;top:629px;width:12px;height:15px;background:#7f7f7f"></div><div class="t" style="left:148px;top:629px;font-size:11.1px">2019-10-03 11:20:29</div><div class="a" style="left:145px;top:644px;width:122px;height:1px;background:#b4b4b4"></div><div class="a" style="left:145px;top:645px;width:110px;height:15px;background:#c5ddf4"></div><div class="a" style="left:255px;top:645px;width:12px;height:15px;background:#7f7f7f"></div><div class="t" style="left:148px;top:645px;font-size:11.1px">2019-12-01 11:34:07</div><div class="a" style="left:145px;top:660px;width:122px;height:1px;background:#b4b4b4"></div><div class="a" style="left:145px;top:661px;width:110px;height:15px;background:#c5ddf4"></div><div class="a" style="left:255px;top:661px;width:12px;height:15px;background:#7f7f7f"></div><div class="t" style="left:148px;top:661px;font-size:11.1px">2020-03-12 10:55:22</div><div class="a" style="left:145px;top:676px;width:122px;height:1px;background:#b4b4b4"></div><div class="a" style="left:145px;top:677px;width:110px;height:15px;background:#c5ddf4"></div><div class="a" style="left:255px;top:677px;width:12px;height:15px;background:#7f7f7f"></div><div class="t" style="left:148px;top:677px;font-size:11.1px">2020-04-21 11:20:27</div><div class="a" style="left:145px;top:692px;width:122px;height:1px;background:#b4b4b4"></div><div class="a" style="left:145px;top:693px;width:110px;height:14px;background:#c5ddf4"></div><div class="a" style="left:255px;top:693px;width:12px;height:14px;background:#e6e6e6"></div><div class="t" style="left:148px;top:693px;font-size:11.1px">2020-06-01 12:00:00</div>
<div class="a" style="left:267px;top:119px;width:10px;height:598px;background:#f0f0f0"></div><div class="a" style="left:277px;top:118px;width:1px;height:600px;background:#c0c0c0"></div>
<div class="a" style="left:267px;top:119px;width:10px;height:195px;background:#c8c8c8"></div>
<div class="a" style="left:255px;top:707px;width:10px;height:10px;background:#c8c8c8"></div>
<svg class="a" style="left:0;top:0" width="300" height="450" viewBox="0 0 300 450"><g fill="#b4b4b4"><circle cx="139" cy="401.8" r="1.3"/><circle cx="139" cy="406.4" r="1.3"/><circle cx="139" cy="411" r="1.3"/><circle cx="282.6" cy="413.7" r="1.3"/><circle cx="282.6" cy="418.4" r="1.3"/><circle cx="282.6" cy="423.2" r="1.3"/></g></svg>

<!-- ===== chart ===== -->
<div class="a" style="left:288px;top:118px;width:824px;height:601px;background:#fff"></div>
<svg class="a" style="left:288px;top:118px" width="824" height="601" viewBox="288 118 824 601" font-family="Liberation Sans" shape-rendering="crispEdges">
<text x="534.2" y="137.5" font-size="17.6" fill="#000" shape-rendering="auto">12020031323130231</text>
<path d="M376.5 148 V410 M434.5 148 V410 M492.5 148 V410 M550.5 148 V410 M608.5 148 V410 M666.5 148 V410 M724.5 148 V410 M782.5 148 V410 M840.5 148 V410 M898.5 148 V410 M352 389.5 H939 M352 366.5 H939 M352 344.5 H939 M352 321.5 H939 M352 299.5 H939 M352 276.5 H939 M352 254.5 H939 M352 231.5 H939 M352 209.5 H939 M352 186.5 H939 M352 164.5 H939" stroke="#c0c0c0" stroke-width="1" stroke-dasharray="2 2" fill="none"/>
<rect x="352.5" y="148.5" width="587" height="262" fill="none" stroke="#808080" stroke-width="1"/>
<path d="M350 389.5 H352 M350 366.5 H352 M350 344.5 H352 M350 321.5 H352 M350 299.5 H352 M350 276.5 H352 M350 254.5 H352 M350 231.5 H352 M350 209.5 H352 M350 186.5 H352 M350 164.5 H352" stroke="#000" stroke-width="1"/>
<rect x="850" y="149" width="1" height="261" fill="#808080"/>
<path d="M376.5 436 V698 M434.5 436 V698 M492.5 436 V698 M550.5 436 V698 M608.5 436 V698 M666.5 436 V698 M724.5 436 V698 M782.5 436 V698 M840.5 436 V698 M898.5 436 V698 M352 461.5 H939 M352 490.5 H939 M352 519.5 H939 M352 548.5 H939 M352 576.5 H939 M352 605.5 H939 M352 634.5 H939 M352 663.5 H939 M352 692.5 H939" stroke="#c0c0c0" stroke-width="1" stroke-dasharray="2 2" fill="none"/>
<rect x="352.5" y="436.5" width="587" height="262" fill="none" stroke="#808080" stroke-width="1"/>
<path d="M350 461.5 H352 M350 490.5 H352 M350 519.5 H352 M350 548.5 H352 M350 576.5 H352 M350 605.5 H352 M350 634.5 H352 M350 663.5 H352 M350 692.5 H352" stroke="#000" stroke-width="1"/>
<rect x="850" y="437" width="1" height="261" fill="#808080"/>
<text x="346.2" y="393" font-size="9" text-anchor="end" shape-rendering="auto">7,500</text>
<text x="346.2" y="370" font-size="9" text-anchor="end" shape-rendering="auto">10,000</text>
<text x="346.2" y="348" font-size="9" text-anchor="end" shape-rendering="auto">12,500</text>
<text x="346.2" y="325" font-size="9" text-anchor="end" shape-rendering="auto">15,000</text>
<text x="346.2" y="303" font-size="9" text-anchor="end" shape-rendering="auto">17,500</text>
<text x="346.2" y="280" font-size="9" text-anchor="end" shape-rendering="auto">20,000</text>
<text x="346.2" y="258" font-size="9" text-anchor="end" shape-rendering="auto">22,500</text>
<text x="346.2" y="235" font-size="9" text-anchor="end" shape-rendering="auto">25,000</text>
<text x="346.2" y="213" font-size="9" text-anchor="end" shape-rendering="auto">27,500</text>
<text x="346.2" y="190" font-size="9" text-anchor="end" shape-rendering="auto">30,000</text>
<text x="346.2" y="168" font-size="9" text-anchor="end" shape-rendering="auto">32,500</text>
<text x="346.2" y="465" font-size="9" text-anchor="end" shape-rendering="auto">1</text>
<text x="346.2" y="494" font-size="9" text-anchor="end" shape-rendering="auto">0</text>
<text x="346.2" y="523" font-size="9" text-anchor="end" shape-rendering="auto">-1</text>
<text x="346.2" y="552" font-size="9" text-anchor="end" shape-rendering="auto">-2</text>
<text x="346.2" y="580" font-size="9" text-anchor="end" shape-rendering="auto">-3</text>
<text x="346.2" y="609" font-size="9" text-anchor="end" shape-rendering="auto">-4</text>
<text x="346.2" y="638" font-size="9" text-anchor="end" shape-rendering="auto">-5</text>
<text x="346.2" y="667" font-size="9" text-anchor="end" shape-rendering="auto">-6</text>
<text x="346.2" y="696" font-size="9" text-anchor="end" shape-rendering="auto">-7</text>
<path d="M376.5 698 V701 M434.5 698 V701 M492.5 698 V701 M550.5 698 V701 M608.5 698 V701 M666.5 698 V701 M724.5 698 V701 M782.5 698 V701 M840.5 698 V701 M898.5 698 V701" stroke="#000" stroke-width="1"/>
<text x="376.6" y="712" font-size="9" text-anchor="middle" shape-rendering="auto">2017-01-01</text>
<text x="434.5" y="712" font-size="9" text-anchor="middle" shape-rendering="auto">2018-01-01</text>
<text x="492.5" y="712" font-size="9" text-anchor="middle" shape-rendering="auto">2019-01-01</text>
<text x="550.4" y="712" font-size="9" text-anchor="middle" shape-rendering="auto">2020-01-01</text>
<text x="608.5" y="712" font-size="9" text-anchor="middle" shape-rendering="auto">2021-01-01</text>
<text x="666.4" y="712" font-size="9" text-anchor="middle" shape-rendering="auto">2022-01-01</text>
<text x="724.4" y="712" font-size="9" text-anchor="middle" shape-rendering="auto">2023-01-01</text>
<text x="782.3" y="712" font-size="9" text-anchor="middle" shape-rendering="auto">2024-01-01</text>
<text x="840.4" y="712" font-size="9" text-anchor="middle" shape-rendering="auto">2025-01-01</text>
<text x="898.3" y="712" font-size="9" text-anchor="middle" shape-rendering="auto">2026-01-01</text>
<text transform="translate(311.5,278.5) rotate(-90)" font-size="12" text-anchor="middle" shape-rendering="auto">sand surface (m2)&#160;&#160;NAP</text>
<text transform="translate(311.5,566) rotate(-90)" font-size="12" text-anchor="middle" shape-rendering="auto">sand volume (m3)&#160;&#160;NAP</text>
<path d="M951 159.5 H966 M951 447.5 H966" stroke="#0000ff" stroke-width="1"/><path d="M951 466.5 H966" stroke="#ff0000" stroke-width="1"/>
<text x="969.5" y="164" font-size="11.2" shape-rendering="auto">sand surface (pixel)</text>
<text x="969.5" y="452" font-size="11.4" shape-rendering="auto">sand sedimentation (pixel)</text>
<text x="969.5" y="471" font-size="11.3" shape-rendering="auto">sand erosion (pixel)</text>
<polyline points="388.2,263.2 389.3,264.2 389.5,252.2 399.0,269.3 407.3,270.3 407.6,290.0 408.0,283.0 408.5,309.6 409.4,248.4 410.4,252.8 418.0,306.0 422.5,276.3 446.3,244.6 447.6,251.6 448.9,276.3 449.5,290.9 450.4,303.5 451.4,268.0 451.4,331.4 452.0,278.2 452.0,287.7 459.7,278.8 465.4,252.6 471.1,255.4 475.5,297.2 483.1,298.5 498.3,298.5 507.8,299.5 513.9,304.0 521.3,276.4 521.6,221.0 522.5,166.5 523.1,180.3 523.5,209.0 524.8,243.0 525.7,209.0 526.6,309.6 526.6,212.6 528.1,228.3 532.7,274.5 535.5,281.9 545.6,297.6 561.3,306.0 567.8,254.2 575.4,221.4 576.4,248.4 577.0,300.4 577.9,355.4 578.5,381.4 579.5,305.6 580.6,279.6 581.6,301.4 586.2,281.7 587.4,293.1 588.9,337.8 590.3,371.0 591.0,306.6 593.0,301.4 602.4,238.0 611.7,229.7 620.5,221.1 625.2,263.6 626.5,204.5 627.9,223.9 634.4,295.0 635.3,270.0 638.1,233.1 640.9,184.2 642.7,159.2 647.3,164.8 649.2,194.3 652.9,260.8 675.6,229.4 676.1,250.9 676.4,272.3 683.3,260.5 683.6,247.4 689.5,263.3 693.0,285.4 702.0,277.8 710.3,255.0 715.1,252.2 726.2,245.3 726.5,240.0 727.6,248.1 737.2,308.3 743.2,284.2 750.0,278.2 753.0,251.2 754.5,229.5 756.4,212.2 757.2,226.5 757.5,255.7 759.0,300.0 764.5,307.1 764.5,254.2 766.5,288.0 774.3,254.2 801.2,245.1 802.3,287.3 802.7,329.8 803.7,308.0 805.4,303.9 811.2,342.3 811.6,370.3 812.6,397.3 813.3,338.1 814.1,355.8 818.3,320.5 821.4,280.0 823.4,324.6 839.6,269.6 840.7,259.3 843.8,257.2 845.9,237.5" fill="none" stroke="#0000ff" stroke-width="1.1" shape-rendering="auto" stroke-linejoin="miter" stroke-miterlimit="2"/>
<polyline points="574.0,490.1 631.3,476.0 639.2,476.4 655.0,478.2 668.4,478.9 683.0,480.0 690.9,480.0 722.4,474.8 747.1,471.5 805.6,448.3" fill="none" stroke="#0000ff" stroke-width="1.1" shape-rendering="auto"/>
<polyline points="574.0,490.1 632.4,498.5 689.8,489.9 747.1,519.8 805.7,686.6" fill="none" stroke="#ff0000" stroke-width="1.1" shape-rendering="auto"/>
<path d="M535.5 293.5 V309 L539 305.5 L541.8 311.5 L544 310.5 L541.3 304.8 H546.5 Z" fill="#fff" stroke="#111" stroke-width="0.9" stroke-linejoin="round" shape-rendering="auto"/>
</svg>
<!-- ===== /chart ===== -->
<!-- ===== tabs ===== -->
<div class="a" style="left:144px;top:717px;width:135px;height:1px;background:#a8a8a8"></div>
<div class="a" style="left:219px;top:718px;width:187px;height:3px;background:#3a7fc8"></div>
<div class="a" style="left:219px;top:721px;width:187px;height:30px;background:#dee5ed"></div>
<div class="a" style="left:218px;top:724px;width:1px;height:22px;background:#b0b0b0"></div>
<div class="t" style="left:180.5px;top:728px;font-weight:bold;font-size:10.9px;color:#111">Kaart</div>
<div class="t" style="left:258px;top:728px;font-weight:bold;font-size:10.9px;color:#111">Time series display</div>
<div class="t" style="left:442.4px;top:728px;font-weight:bold;font-size:10.9px;color:#111">Tasks display</div>
<svg class="a" style="left:0;top:0" width="600" height="760" viewBox="0 0 600 760" fill="none" stroke="#333" stroke-width="1.1">
  <!-- kaart pin -->
  <path d="M157.5 741.5 L162.4 735.8 M174.5 741.5 L169.6 735.8 M157 741.5 H175" stroke="#333" stroke-width="1.1"/>
  <path d="M166 738.7 L162.3 734.5 A4.6 4.6 0 1 1 169.7 734.5 Z" fill="none" stroke="#444" stroke-width="1.1" stroke-linejoin="round"/>
  <rect x="164.4" y="730.3" width="3.3" height="3.3" rx="0.8" stroke="#333" stroke-width="1.1"/>
  <!-- ts icon -->
  <rect x="233.5" y="725.5" width="3" height="19" rx="1" fill="#fff" stroke="#555" stroke-width="1"/>
  <rect x="237" y="725.5" width="3" height="19" fill="#777" stroke="#555" stroke-width="1"/>
  <path d="M240.5 730 L243.7 727 L248.5 731.5 L253 728.5 M240.5 734.5 H253 M240.5 737 L253 742.5 M240.5 744.5 H253" stroke="#444" stroke-width="1.1"/>
  <!-- maximize & close -->
  <rect x="364.5" y="731.5" width="7.5" height="7.5" stroke="#111" stroke-width="1.1"/>
  <rect x="364.5" y="731" width="7.5" height="1.6" fill="#111" stroke="none"/>
  <path d="M380.5 731.5 L388 739 M388 731.5 L380.5 739" stroke="#333" stroke-width="1.1"/>
  <!-- tasks icon -->
  <rect x="418.6" y="727.8" width="18.6" height="11.5" rx="1" stroke="#666" stroke-width="1.3"/>
  <path d="M428.5 727.8 V739.3" stroke="#777" stroke-width="1.1"/>
  <path d="M418.9 736.4 L424.3 731.9 L428.8 736.4 L436.9 731.3" stroke="#333" stroke-width="1.1"/>
  <path d="M428.2 744.4 L429.2 741.2 L435 735.4 L437.4 737.8 L431.6 743.6 Z" fill="#f4f4f4" stroke="#222" stroke-width="1.1" stroke-linejoin="round"/>
  <!-- dots -->
  <g fill="#a8a8a8" stroke="none"><circle cx="564.6" cy="755.8" r="1.3"/><circle cx="569.5" cy="755.8" r="1.3"/><circle cx="574.5" cy="755.8" r="1.3"/></g>
</svg>

<!-- ===== logs ===== -->
<div class="a" style="left:21px;top:761px;width:1091px;height:19px;background:#c1bcb6;box-shadow:inset 0 1px 0 #b2aea8"></div>
<div class="t" style="left:50px;top:764px;color:#fff;font-size:11.6px;letter-spacing:0.4px">Logs</div>
<svg class="a" style="left:0;top:0" width="1112" height="867" viewBox="0 0 1112 867" fill="none">
  <path d="M33.2 763.8 H40 L42.6 766.6 V777.8 H33.2 Z" stroke="#fff" stroke-width="1.2"/>
  <rect x="34" y="764.5" width="6" height="1.6" fill="#e8e8e8"/>
  <rect x="34" y="766" width="0.1" height="0.1" fill="#fff"/>
  <path d="M34 766.3 H39" stroke="#888" stroke-width="0.9"/>
  <rect x="34" y="767" width="7.8" height="4.5" fill="#fff"/>
  <rect x="1089.5" y="767.5" width="8.5" height="8.5" stroke="#fff" stroke-width="1.1"/>
  <rect x="1103" y="773" width="7" height="2" fill="#fff"/>
</svg>
<div class="a" style="left:21px;top:780px;width:1091px;height:65px;background:#fff;border-left:1px solid #c4c4c4;border-bottom:1px solid #c4c4c4;border-bottom-left-radius:3px;box-sizing:border-box"></div>
<div class="a" style="left:1107px;top:780px;width:5px;height:65px;background:#f0f0f0"></div>
<div class="a" style="left:1107px;top:780px;width:5px;height:16px;background:#c8c8c8"></div>
<div class="t" style="left:28.5px;top:782.5px;font-size:11.5px">2025-03-06 10:43:27 INFO - Application.Startup.Finished: De applicatie is volledig opgestart. (10s;Unmarshall region config 1 s;Time series display 1 s;cpu 23%)</div>
<div class="t" style="left:28.5px;top:798.5px;font-size:11.5px">2025-03-06 10:43:25 INFO - Download index snapshot to C:\Users\fews\AppData\Local\fews\local oc clientConfig\temp\index</div>
<div class="t" style="left:28.5px;top:814.5px;font-size:11.5px">2025-03-06 10:43:25 INFO - Correct version found of database schema: v2024.01_20240327_0 with entry date 18/11/2024&nbsp; 12:31:50.285 GMT.</div>
<div class="t" style="left:28.5px;top:830.5px;font-size:11.5px">2025-03-06 10:43:23 INFO - Application.Info: version: 2024.01, build: 134298 (patched from 131781) , September 20, 2024, type: stable, config revision:mc00;24, jre: 17.0.9, os:Windows Server 2022, user:fews,</div>
<div class="a" style="left:21px;top:844px;width:1091px;height:1px;background:#c4c4c4"></div>

<!-- ===== status bar ===== -->
<div class="a" style="left:27px;top:848px;width:33px;height:19px;background:#d4d4d4"></div>
<div class="t" style="left:31.5px;top:850px;font-weight:bold;font-size:11px;color:#222">Logs</div>
<div class="a" style="left:101px;top:848px;width:1px;height:19px;background:#c4c4c4"></div>
<div class="a" style="left:104px;top:848px;width:1px;height:19px;background:#c4c4c4"></div>
<div class="t" style="left:110.8px;top:850px;font-size:11.4px">fews</div>
<div class="t" style="left:157.3px;top:850px;font-size:11.55px">Huidige systeemtijd: 2025-03-06 10:00 GMT</div>
<div class="t" style="left:577.6px;top:850px;font-size:10.9px">07:55:57 PDT</div>
<div class="a" style="left:700px;top:848px;width:53px;height:19px;background:#c8f0a8"></div>
<div class="t" style="left:700.5px;top:850px;font-size:11.4px">mc00</div>
<div class="t" style="left:755.2px;top:850px;font-size:10.9px">53.378 , 5.209</div>
<div class="t" style="left:954.4px;top:850px;font-size:11.4px">0.0 MB/s</div>
<div class="a" style="left:1040px;top:848px;width:69px;height:19px;background:#d6d6d6"></div>
<div class="a" style="left:1040px;top:848px;width:18px;height:19px;background:#a8d2f2"></div>
<div class="t" style="left:1040px;top:850px;font-size:11.3px">478 MB</div>
<svg class="a" style="left:0;top:0" width="1112" height="867" viewBox="0 0 1112 867">
  <path d="M891.5 852.5 L899 865 H884 Z" fill="#f6e800" stroke="#333" stroke-width="1" stroke-linejoin="round"/>
  <path d="M891.5 856 V861" stroke="#111" stroke-width="1.2"/><circle cx="891.5" cy="862.8" r="0.7" fill="#111"/>
</svg>

</body></html>
